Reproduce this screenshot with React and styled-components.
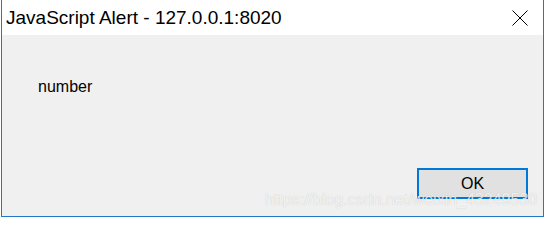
import React from 'react'
import styled, { createGlobalStyle } from "styled-components";

const GlobalStyle = createGlobalStyle`
    html, body {
        margin: 0;
        padding: 0;
        background: #ffffff;
    }
    body {
        font-family: "Liberation Sans", Arial, sans-serif;
    }
`;

const Page = styled.div`
    width: 545px;
    height: 220px;
    padding-left: 1px;
    box-sizing: border-box;
`;

const Window = styled.div`
    position: relative;
    width: 543px;
    height: 217px;
    box-sizing: border-box;
    border: 1px solid #1f78cb;
    border-top: none;
    display: flex;
    flex-direction: column;
`;

const TitleBar = styled.div`
    height: 35px;
    flex: none;
    background: #ffffff;
    display: flex;
    align-items: center;
    justify-content: space-between;
    padding: 0 15px 0 4px;
`;

const Title = styled.span`
    font-size: 19px;
    line-height: 35px;
    color: #000000;
    white-space: nowrap;
`;

const CloseIcon = styled.svg`
    width: 16px;
    height: 16px;
    display: block;
`;

const Body = styled.div`
    flex: 1;
    background: #f0f0f0;
    display: flex;
    flex-direction: column;
    justify-content: space-between;
    padding: 43px 15px 17px 36px;
    box-sizing: border-box;
`;

const Message = styled.p`
    margin: 0;
    font-size: 16px;
    color: #000000;
`;

const Actions = styled.div`
    display: flex;
    justify-content: flex-end;
`;

const Button = styled.button`
    width: 111px;
    height: 31px;
    box-sizing: border-box;
    border: 2px solid #0078d7;
    background: #e1e1e1;
    font-family: "Liberation Sans", Arial, sans-serif;
    font-size: 16px;
    color: #000000;
    padding: 0;
`;

const Watermark = styled.span`
    position: absolute;
    left: 263px;
    top: 190px;
    font-size: 16px;
    line-height: 20px;
    color: rgba(255, 255, 255, 0.8);
    text-shadow: 0 0 1px rgba(0, 0, 0, 0.22);
    white-space: nowrap;
    pointer-events: none;
`;

export default function App() {
    return (
        <Page>
            <GlobalStyle />
            <Window>
                <TitleBar>
                    <Title>JavaScript Alert - 127.0.0.1:8020</Title>
                    <CloseIcon viewBox="0 0 16 16">
                        <path d="M0.5 0.5 L15.5 15.5 M15.5 0.5 L0.5 15.5" stroke="#000" strokeWidth="1" fill="none" />
                    </CloseIcon>
                </TitleBar>
                <Body>
                    <Message>number</Message>
                    <Actions>
                        <Button>OK</Button>
                    </Actions>
                </Body>
                <Watermark>https://blog.csdn.net/weixin_43249530</Watermark>
            </Window>
        </Page>
    )
}
